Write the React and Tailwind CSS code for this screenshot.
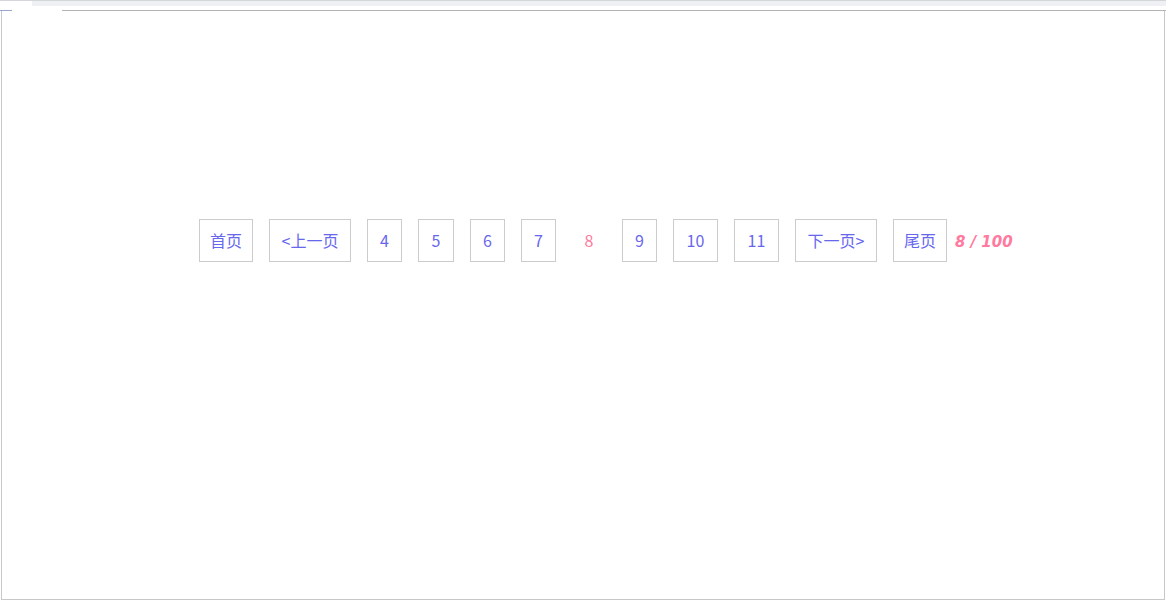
export default function App() {
  const box = "h-[43px] pb-[2px] border border-[#cccccc] flex items-center justify-center text-[16px] text-[#6767ee]";
  return (
    <div className="w-[1166px] h-[601px] bg-white overflow-hidden" style={{ fontFamily: '"Noto Sans CJK SC", "Noto Sans", sans-serif' }}>
      <div className="h-[1px] bg-[#d4d6da]" />
      <div className="h-[5px] flex">
        <div className="w-[32px] bg-white" />
        <div className="flex-1 bg-[#eef0f4]" />
      </div>
      <div className="h-[4px] bg-white" />
      <div className="flex h-[1px]">
        <div className="w-[12px] bg-[#9aa3c8]" />
        <div className="w-[50px] bg-white" />
        <div className="flex-1 bg-[#b4b4b4]" />
      </div>
      <div className="ml-[1px] w-[1164px] h-[589px] border-l border-r border-b border-[#c8c8c8] bg-white pt-[208px]">
        <div className="flex items-center gap-[16px] pl-[197px]">
          <div className={box + " w-[54px]"}>首页</div>
          <div className={box + " w-[82px]"}>&lt;上一页</div>
          <div className={box + " w-[35px]"}>4</div>
          <div className={box + " w-[36px]"}>5</div>
          <div className={box + " w-[35px]"}>6</div>
          <div className={box + " w-[35px]"}>7</div>
          <div className="h-[43px] pb-[2px] w-[34px] flex items-center justify-center text-[16px] text-[#ff7a9e]">8</div>
          <div className={box + " w-[35px]"}>9</div>
          <div className={box + " w-[45px]"}>10</div>
          <div className={box + " w-[45px]"}>11</div>
          <div className={box + " w-[82px]"}>下一页&gt;</div>
          <div className={box + " w-[54px]"}>尾页</div>
          <div className="-ml-[8px] pt-[3px] text-[15px] italic font-bold text-[#ff7a9e] whitespace-pre" style={{ fontFamily: '"DejaVu Sans", sans-serif' }}>8 / 100</div>
        </div>
      </div>
    </div>
  );
}
